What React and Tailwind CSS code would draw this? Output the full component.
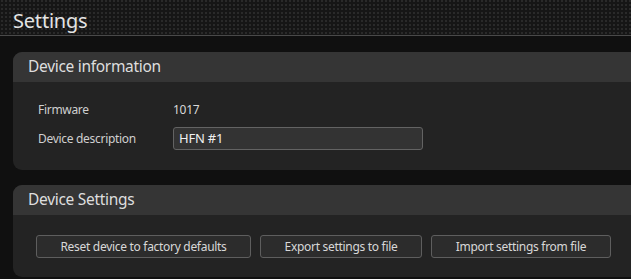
import React from "react";

export default function App() {
  return (
    <div className="w-[631px] h-[279px] overflow-hidden bg-[#101010] text-[#d8d8d8] [font-family:'Noto_Sans','Open_Sans',sans-serif]">
      <div className="h-[36px] border-b border-[#4a4a4a] bg-[#2a2a2a] bg-[image:linear-gradient(to_bottom,transparent_2px,#161616_2px),linear-gradient(to_right,transparent_2px,#161616_2px)] bg-[length:4px_4px] bg-[position:1px_0] flex items-center pl-[13px]">
        <span className="text-[20px] leading-none text-[#e4e4e4] tracking-[-0.2px] pt-[7px]">Settings</span>
      </div>
      <div className="pl-[13px] pt-[16px] flex flex-col gap-[15px]">
        <section className="rounded-l-[9px] overflow-hidden bg-[#232323] mr-[-20px]">
          <div className="h-[30px] bg-[#353535] flex items-center pl-[15px] text-[15.5px] tracking-[-0.3px] text-[#dedede]">Device information</div>
          <div className="h-[88px] pl-[25px] pt-[18px] text-[12px] tracking-[-0.3px] text-[#cfcfcf]">
            <div className="flex items-center h-[20px]">
              <span className="w-[135px]">Firmware</span>
              <span className="text-[#d8d8d8]">1017</span>
            </div>
            <div className="flex items-center mt-[7px]">
              <span className="w-[135px]">Device description</span>
              <div className="w-[250px] h-[23px] rounded-[3px] border border-[#636363] bg-[#333333] flex items-center pl-[5px] text-[13px] tracking-[-0.2px] text-[#f0f0f0]">HFN #1</div>
            </div>
          </div>
        </section>
        <section className="rounded-l-[9px] overflow-hidden bg-[#232323] mr-[-20px]">
          <div className="h-[30px] bg-[#353535] flex items-center pl-[15px] text-[15.5px] tracking-[-0.3px] text-[#dedede]">Device Settings</div>
          <div className="h-[62px] pl-[23px] pt-[20px] flex gap-[9px] text-[12px] tracking-[-0.3px] text-[#d8d8d8]">
            <button className="w-[215px] h-[23px] rounded-[3px] border border-[#5e5e5e] bg-[#2c2c2c] flex items-center justify-center">Reset device to factory defaults</button>
            <button className="w-[162px] h-[23px] rounded-[3px] border border-[#5e5e5e] bg-[#2c2c2c] flex items-center justify-center">Export settings to file</button>
            <button className="w-[180px] h-[23px] rounded-[3px] border border-[#5e5e5e] bg-[#2c2c2c] flex items-center justify-center">Import settings from file</button>
          </div>
        </section>
      </div>
    </div>
  );
}
